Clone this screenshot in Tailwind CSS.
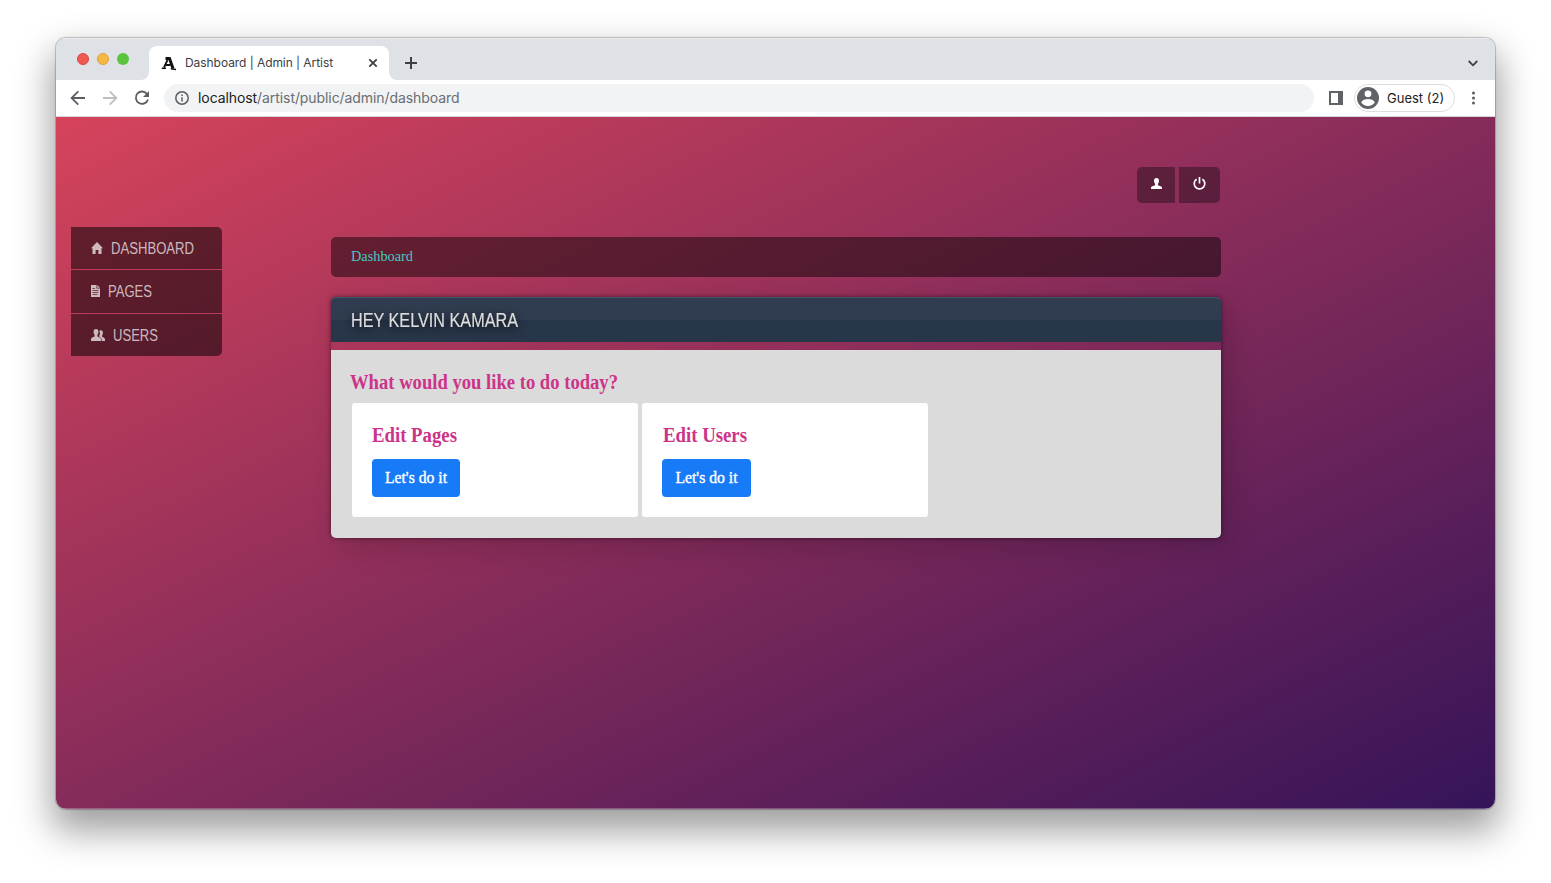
<!DOCTYPE html>
<html lang="en">
<head>
<meta charset="utf-8">
<title>Dashboard | Admin | Artist</title>
<script src="https://cdn.jsdelivr.net/npm/@tailwindcss/browser@4"></script>
</head>
<body class="w-[1551px] h-[883px] overflow-hidden bg-white pt-[38px] pl-[56px] font-['Inter',sans-serif]">
<div class="w-[1439px] h-[771px] rounded-[10px] shadow-[0_0_1px_1px_rgba(0,0,0,0.22),0_18px_36px_4px_rgba(0,0,0,0.38)]">
<div class="w-full h-full rounded-[10px] overflow-hidden flex flex-col">
  <!-- tab strip -->
  <header class="h-[42px] shrink-0 bg-[#dee1e6] flex items-end relative border-t border-[#eceef0]">
    <div class="flex gap-2 pl-[21px] pb-[15px] w-[85px] shrink-0">
      <i class="size-3 rounded-full bg-[#ee5a52] border border-[#e0443e]"></i>
      <i class="size-3 rounded-full bg-[#f6b843] border border-[#dfa03a]"></i>
      <i class="size-3 rounded-full bg-[#5bc43d]"></i>
    </div>
    <svg class="w-2 h-2 shrink-0" viewBox="0 0 8 8"><path d="M8 0v8H0a8 8 0 0 0 8-8z" fill="#fff"/></svg>
    <div class="w-[240px] h-[34px] shrink-0 bg-white rounded-t-[8px] flex items-center pl-3">
      <svg class="w-4 h-4 shrink-0" viewBox="0 0 16 16" fill="none" stroke="#111"><path d="M4.500 3.600h4L12 13.500" stroke-width="3"/><path d="M6.500 5 3 12.500M4.500 10h5" stroke-width="1.800"/><path d="M.8 13.200h4.200M9.800 13.800l5.200.8" stroke-width="1.500"/></svg>
      <span class="ml-2 text-[12px] leading-4 text-[#3c4043] w-[150px] whitespace-nowrap tracking-[-0.06px]">Dashboard | Admin | Artist</span>
      <svg class="size-[10px] ml-[33px]" viewBox="0 0 10 10" stroke="#3c4043" stroke-width="1.8"><path d="M1.300 1.300l7.400 7.400M8.700 1.300L1.300 8.700"/></svg>
    </div>
    <svg class="w-2 h-2 shrink-0" viewBox="0 0 8 8"><path d="M0 0v8h8a8 8 0 0 1-8-8z" fill="#fff"/></svg>
    <svg class="size-3 ml-2 mb-[11px]" viewBox="0 0 12 12" stroke="#3c4043" stroke-width="2"><path d="M6 0v12M0 6h12"/></svg>
    <svg class="w-[10px] h-[7px] ml-auto mr-[17px] mb-[13px]" viewBox="0 0 10 7" fill="none" stroke="#3c4043" stroke-width="1.8"><path d="M.7 1l4.3 4.3L9.3 1"/></svg>
  </header>
  <!-- toolbar -->
  <div class="h-[37px] shrink-0 bg-white border-b border-[#d5d6d8] flex items-center">
    <svg class="size-4 ml-[14px]" viewBox="0 0 16 16" fill="none" stroke="#5a5e63" stroke-width="1.8"><path d="M15 8H2M8.3 1.3L1.6 8l6.7 6.7"/></svg>
    <svg class="size-4 ml-4" viewBox="0 0 16 16" fill="none" stroke="#bdbfc1" stroke-width="1.8"><path d="M1 8h13M7.7 1.3L14.4 8l-6.7 6.7"/></svg>
    <svg class="size-4 ml-4" viewBox="0 0 16 16"><path d="M13.2 4.2A6.2 6.2 0 1 0 14 9.5" fill="none" stroke="#5a5e63" stroke-width="1.8"/><path d="M15 1v6H9z" fill="#5a5e63"/></svg>
    <div class="ml-[14px] w-[1150px] h-7 rounded-full bg-[#f1f3f4] flex items-center pl-[11px]">
      <svg class="size-[14px]" viewBox="0 0 14 14" fill="none" stroke="#5a5e63" stroke-width="1.5"><circle cx="7" cy="7" r="6.2"/><path d="M7 6.2v4.2M7 3.5v1.6"/></svg>
      <span class="ml-[9px] text-[14px] leading-5 text-[#6a6e73] whitespace-nowrap tracking-[-0.08px]"><span class="text-[#202124]">localhost</span>/artist/public/admin/dashboard</span>
    </div>
    <svg class="size-[14px] ml-[15px]" viewBox="0 0 14 14"><path d="M0 0h14v14H0zM2 2v10h7V2z" fill="#5f6368" fill-rule="evenodd"/></svg>
    <div class="ml-[11px] w-[101px] h-7 rounded-full border border-[#dcdee1] flex items-center pl-[2px]">
      <svg class="size-[22px] shrink-0" viewBox="0 0 22 22"><circle cx="11" cy="11" r="11" fill="#5f6368"/><circle cx="11" cy="6.8" r="3.4" fill="#fff"/><path d="M4.2 15.2c1-2.2 4.2-3.3 6.8-3.3s5.800 1.100 6.800 3.300A8.200 8.200 0 0 1 11 19a8.200 8.200 0 0 1-6.800-3.800z" fill="#fff"/></svg>
      <span class="ml-2 text-[13px] leading-4 text-[#202124] whitespace-nowrap">Guest (2)</span>
    </div>
    <svg class="w-1 h-[14px] ml-4" viewBox="0 0 4 14" fill="#5a5e63"><circle cx="2.500" cy="2" r="1.500"/><circle cx="2.500" cy="7" r="1.500"/><circle cx="2.500" cy="12" r="1.500"/></svg>
  </div>
  <!-- page -->
  <main class="flex-1 flex bg-linear-[to_bottom_right,#d6435b,#351459] shadow-[inset_0_-1px_0_rgba(255,255,255,0.25)]">
    <nav class="ml-[15px] mt-[110px] w-[151px] h-[129px] shrink-0 flex flex-col gap-px text-[16px] text-white/70 font-['Liberation_Sans_Narrow','Liberation_Sans',sans-serif]">
      <a class="h-[42px] bg-black/52 rounded-tr-[5px] flex items-center pl-5">
        <svg class="w-3 h-3" viewBox="0 0 12 12" fill="currentColor"><path d="M6 0l6 6.300h-1.500V12H7.400V8H4.600v4H1.500V6.300H0z"/></svg>
        <svg class="ml-2 w-[84px] h-5 overflow-visible" viewBox="0 0 84 20" fill="currentColor"><text x="0" y="16" textLength="83" lengthAdjust="spacingAndGlyphs">DASHBOARD</text></svg>
      </a>
      <a class="h-[43px] bg-black/52 flex items-center pl-5 pb-px">
        <svg class="w-[9px] h-3" viewBox="0 0 9 12"><path d="M0 0h5.500v3.500H9V12H0zM6.300 0L9 2.700H6.300zM1.500 3h2.500v.8h-2.500zM1.500 5h6v.8h-6zM1.500 7h6v.8h-6zM1.500 9h5v.8h-5z" fill="currentColor" fill-rule="evenodd"/></svg>
        <svg class="ml-2 w-[46px] h-5 overflow-visible" viewBox="0 0 46 20" fill="currentColor"><text x="0" y="16" textLength="44" lengthAdjust="spacingAndGlyphs">PAGES</text></svg>
      </a>
      <a class="h-[42px] bg-black/52 rounded-br-[5px] flex items-center pl-5">
        <svg class="w-[14px] h-3" viewBox="0 0 14 12" fill="currentColor"><path d="M5 0c1.700 0 2.400 1.100 2.400 2.700 0 1.500-.4 2.500-1 3.100v1.700c1.500.7 3.600 1.200 3.600 2.800V12H0v-1.700c0-1.600 2-2.100 3.600-2.800V5.800c-.6-.6-1-1.600-1-3.100C2.600 1.100 3.300 0 5 0z"/><path d="M8.200 2.100c.4-.5 1-.8 1.700-.8 1.400 0 2 1 2 2.500 0 1.200-.3 2-.8 2.600v1.400c1.200.7 2.900 1.200 2.900 2.700V12h-3.200c0-2.300-.9-3.200-2.500-4.200V6.600c.5-.8 1.200-2.700-.1-4.500z"/></svg>
        <svg class="ml-2 w-[48px] h-5 overflow-visible" viewBox="0 0 48 20" fill="currentColor"><text x="0" y="16" textLength="45" lengthAdjust="spacingAndGlyphs">USERS</text></svg>
      </a>
    </nav>
    <section class="ml-[109px] mt-[50px] w-[890px] shrink-0 flex flex-col font-['Liberation_Serif',serif]">
      <div class="flex justify-end gap-1 pr-px h-9">
        <a class="w-[38px] h-9 bg-[#08090d]/38 rounded-l-[5px] flex justify-center pt-[11px]">
          <svg class="w-[11px] h-[11px]" viewBox="0 0 11 11" fill="#fff"><path d="M5.500 0C7.300 0 8 1.200 8 2.700c0 1.400-.5 2.500-1.100 3.200v1.400C8.600 8 11 8.300 11 9.800V11H0V9.800C0 8.300 2.400 8 4.100 7.300V5.900C3.500 5.200 3 4.100 3 2.700 3 1.200 3.700 0 5.500 0z"/></svg>
        </a>
        <a class="w-[41px] h-9 bg-[#08090d]/38 rounded-r-[5px] flex justify-center pt-[10px]">
          <svg class="w-[13px] h-[13px]" viewBox="0 0 13 13" fill="none" stroke="#fff" stroke-width="1.700"><path d="M3.600 2.200a5.300 5.300 0 1 0 5.800 0M6.500 0v6.500"/></svg>
        </a>
      </div>
      <div class="mt-[34px] h-10 rounded-[5px] bg-black/46 flex items-center pl-5 text-[#48c7c5]">
        <svg class="w-[64px] h-5 text-[14px] overflow-visible" viewBox="0 0 64 20" fill="currentColor"><text x="0" y="14" textLength="62" lengthAdjust="spacingAndGlyphs">Dashboard</text></svg>
      </div>
      <div class="mt-5 h-[241px] rounded-[5px] shadow-[0_0_4px_rgba(0,0,0,0.5),8px_10px_28px_rgba(0,0,0,0.15)] flex flex-col">
        <div class="h-[45px] shrink-0 rounded-t-[5px] border-t-1 border-[#43556a] bg-linear-[#303d50_0_50%,#28364a_50%_100%] flex items-center pl-5">
          <svg class="w-[190px] h-[34px] overflow-visible text-[20px] font-['Liberation_Sans_Narrow','Liberation_Sans',sans-serif] drop-shadow-[0_2px_5px_rgba(0,0,0,0.8)]" viewBox="0 0 190 34" fill="#dcdcdc" stroke="#dcdcdc" stroke-width=".2"><text x="0" y="24" textLength="167" lengthAdjust="spacingAndGlyphs">HEY KELVIN KAMARA</text></svg>
        </div>
        <div class="mt-2 flex-1 bg-[#dbdbdb] rounded-b-[5px] pt-[18px] pl-[21px]">
          <h3 class="h-[35px] text-[20px] font-bold -ml-[2px]"><svg class="w-[270px] h-[30px] overflow-visible" viewBox="0 0 270 30" fill="#cc3489"><text x="0" y="20.500" textLength="268" lengthAdjust="spacingAndGlyphs">What would you like to do today?</text></svg></h3>
          <div class="flex gap-1">
            <div class="w-[286px] h-[114px] bg-white rounded-[3px] pl-5 pt-[18px]">
              <svg class="w-[90px] h-[28px] text-[20px] font-bold overflow-visible" viewBox="0 0 90 28" fill="#cc3489"><text x="0" y="20.500" textLength="85" lengthAdjust="spacingAndGlyphs">Edit Pages</text></svg>
              <a class="mt-[10px] w-[88px] h-[38px] bg-[#177af7] rounded-[4px] flex items-center pl-[13px]"><svg class="w-[66px] h-[26px] text-[16.5px] overflow-visible" viewBox="0 0 66 26" fill="#fff" stroke="#fff" stroke-width=".4"><text x="0" y="18" textLength="62" lengthAdjust="spacingAndGlyphs">Let's do it</text></svg></a>
            </div>
            <div class="w-[286px] h-[114px] bg-white rounded-[3px] pl-5 pt-[18px]">
              <svg class="w-[90px] h-[28px] text-[20px] font-bold overflow-visible" viewBox="0 0 90 28" fill="#cc3489"><text x="1" y="20.500" textLength="84" lengthAdjust="spacingAndGlyphs">Edit Users</text></svg>
              <a class="mt-[10px] w-[89px] h-[38px] bg-[#177af7] rounded-[4px] flex items-center pl-[13px]"><svg class="w-[66px] h-[26px] text-[16.5px] overflow-visible" viewBox="0 0 66 26" fill="#fff" stroke="#fff" stroke-width=".4"><text x="0.500" y="18" textLength="62" lengthAdjust="spacingAndGlyphs">Let's do it</text></svg></a>
            </div>
          </div>
        </div>
      </div>
    </section>
  </main>
</div>
</div>
</body>
</html>
